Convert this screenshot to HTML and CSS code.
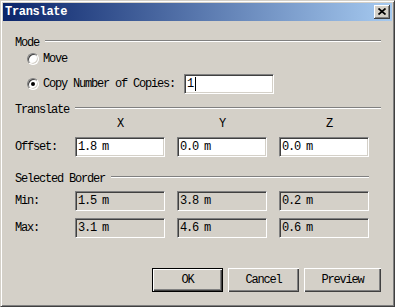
FILE: index.html
```html
<!DOCTYPE html>
<html>
<head>
<meta charset="utf-8">
<link rel="stylesheet" href="styles.css">
</head>
<body>
<div class="window">
  <div class="titlebar">
    <span class="title">Translate</span>
    <span class="close">
      <svg width="8" height="7" viewBox="0 0 8 7"><path d="M0.5 0.5 L7.5 6.5 M7.5 0.5 L0.5 6.5" stroke="#000" stroke-width="1.7" fill="none"/></svg>
    </span>
  </div>
  <div class="content">
    <div class="group-head">Mode</div>
    <div class="radio-row move-row">
      <span class="radio"></span><span class="radio-label">Move</span>
    </div>
    <div class="radio-row copy-row">
      <span class="radio checked"></span><span class="radio-label">Copy Number of Copies:</span>
      <div class="field copies">1<span class="caret"></span></div>
    </div>

    <div class="group-head head-translate">Translate</div>
    <div class="grid grid-translate">
      <span></span>
      <span class="axis">X</span>
      <span class="axis">Y</span>
      <span class="axis axis-z">Z</span>
      <span class="row-label">Offset:</span>
      <input class="field" value="1.8 m">
      <input class="field" value="0.0 m">
      <input class="field" value="0.0 m">
    </div>

    <div class="group-head head-border">Selected Border</div>
    <div class="grid grid-border">
      <span class="row-label">Min:</span>
      <input class="field readonly" value="1.5 m" readonly>
      <input class="field readonly" value="3.8 m" readonly>
      <input class="field readonly" value="0.2 m" readonly>
      <span class="row-label">Max:</span>
      <input class="field readonly" value="3.1 m" readonly>
      <input class="field readonly" value="4.6 m" readonly>
      <input class="field readonly" value="0.6 m" readonly>
    </div>

    <div class="buttons">
      <button class="btn default">OK</button>
      <button class="btn">Cancel</button>
      <button class="btn wide">Preview</button>
    </div>
  </div>
</div>
</body>
</html>
```

FILE: styles.css
```css
html, body {
  margin: 0;
  padding: 0;
  background: #d4d0c8;
}

.window {
  width: 395px;
  height: 307px;
  box-sizing: border-box;
  background: #d4d0c8;
  border: 1px solid;
  border-color: #d4d0c8 #404040 #404040 #d4d0c8;
  box-shadow: inset 1px 1px #ffffff, inset -1px -1px #808080;
  padding: 2px;
  display: flex;
  flex-direction: column;
  font-family: "Liberation Mono", monospace;
  font-size: 12px;
  letter-spacing: -1.2px;
  color: #000;
}

.titlebar {
  height: 18px;
  flex: none;
  display: flex;
  align-items: center;
  justify-content: space-between;
  background: linear-gradient(to right, #0a246a, #a6caf0);
  padding: 0 2px 0 2px;
}

.title {
  color: #fff;
  font-weight: bold;
  letter-spacing: -0.3px;
  line-height: 12px;
}

.close {
  width: 16px;
  height: 14px;
  box-sizing: border-box;
  background: #d4d0c8;
  box-shadow: inset -1px -1px #404040, inset 1px 1px #ffffff, inset -2px -2px #808080;
  display: flex;
  align-items: center;
  justify-content: center;
  padding: 0 1px 1px 0;
}

.close svg {
  display: block;
}

.content {
  flex: 1;
  display: flex;
  flex-direction: column;
  padding: 0 11px 0 12px;
}

.group-head {
  display: flex;
  align-items: flex-start;
  height: 12px;
  line-height: 12px;
  margin-top: 16px;
  white-space: nowrap;
}

.group-head::after {
  content: "";
  flex: 1;
  margin-left: 6px;
  margin-top: 3px;
  height: 0;
  border-top: 1px solid #808080;
  border-bottom: 1px solid #ffffff;
}

.head-translate {
  margin-top: 10px;
}

.head-border {
  margin-top: 16px;
  margin-right: 12px;
}

.radio-row {
  display: flex;
  align-items: center;
  padding-left: 12px;
  line-height: 12px;
}

.move-row {
  height: 16px;
  margin-top: 2px;
}

.copy-row {
  height: 20px;
  margin-top: 7px;
}

.radio {
  width: 12px;
  height: 12px;
  box-sizing: border-box;
  border-radius: 50%;
  border: 1px solid;
  border-color: #808080 #ffffff #ffffff #808080;
  box-shadow: inset 1px 1px #404040, inset -1px -1px #d4d0c8;
  background: #fff;
  position: relative;
  flex: none;
}

.radio.checked::after {
  content: "";
  position: absolute;
  left: 3px;
  top: 3px;
  width: 4px;
  height: 4px;
  border-radius: 50%;
  background: #000;
}

.radio-label {
  margin-left: 4px;
  white-space: nowrap;
}

.field {
  box-sizing: border-box;
  width: 90px;
  height: 20px;
  margin: 0;
  border: 1px solid;
  border-color: #808080 #ffffff #ffffff #808080;
  box-shadow: inset 1px 1px #404040, inset -1px -1px #d4d0c8;
  background: #fff;
  padding: 0 0 0 2px;
  font: inherit;
  letter-spacing: inherit;
  color: #000;
  outline: none;
  appearance: none;
}

.field.readonly {
  background: #d4d0c8;
}

.copies {
  margin-left: 9px;
  display: flex;
  align-items: center;
  line-height: 12px;
}

.caret {
  display: inline-block;
  width: 1px;
  height: 14px;
  background: #000;
  margin-left: 2px;
}

.grid {
  display: grid;
  grid-template-columns: 48px 90px 90px 90px;
  column-gap: 12px;
  align-items: center;
  line-height: 12px;
}

.grid-translate {
  grid-template-rows: 12px 20px;
  row-gap: 7px;
  margin-top: 2px;
}

.grid-border {
  grid-template-rows: 20px 20px;
  row-gap: 7px;
  margin-top: 6px;
}

.axis {
  text-align: center;
}

.axis-z {
  padding-left: 10px;
}

.buttons {
  display: flex;
  justify-content: flex-end;
  gap: 5px;
  margin-top: 30px;
}

.btn {
  width: 71px;
  height: 24px;
  box-sizing: border-box;
  margin: 0;
  padding: 0;
  border: none;
  background: #d4d0c8;
  font: inherit;
  letter-spacing: inherit;
  color: #000;
  line-height: 12px;
  box-shadow: inset 1px 1px #ffffff, inset -1px -1px #404040, inset -2px -2px #808080;
}

.btn.wide {
  width: 77px;
}

.btn.default {
  border: 1px solid #000;
  box-shadow: inset 1px 1px #ffffff, inset -1px -1px #404040, inset -2px -2px #808080;
}
```
